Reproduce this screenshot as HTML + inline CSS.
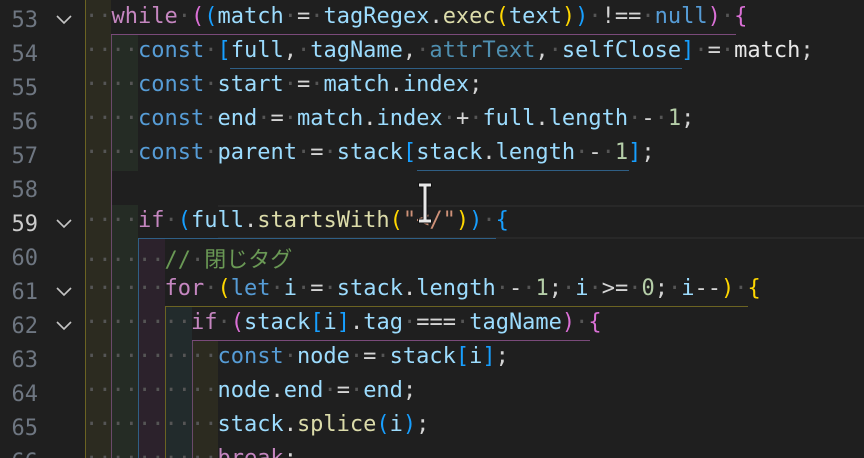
<!DOCTYPE html>
<html><head><meta charset="utf-8"><style>
html,body{margin:0;padding:0;background:#1f1f1f;width:864px;height:458px;overflow:hidden;position:relative}
.ln{position:absolute;left:0;width:38px;text-align:right;font:22px "DejaVu Sans Mono",monospace;color:#6e7681;line-height:34px}
.fold{position:absolute;left:54px;width:20px;height:34px}
.l{position:absolute;left:85px;height:34px;line-height:34px;font:22px "DejaVu Sans Mono","Noto Sans CJK JP",monospace;white-space:pre;color:#d4d4d4}
.d{color:#555}
.bg{position:absolute}
.y{background:#2c2b20}.g{background:#252c25}.p{background:#2c222c}.b{background:#222b2c}
.k{color:#c586c0}.c{color:#569cd6}.v{color:#9cdcfe}.f{color:#dcdcaa}.s{color:#ce9178}.n{color:#b5cea8}.cm{color:#6a9955}
.B1{color:#ffd700}.B2{color:#da70d6}.B3{color:#179fff}.dim{color:#4f8fb0}
.h{position:absolute;height:1px}.vl{position:absolute;width:1px}
.t{position:absolute;left:0;top:3px;width:864px;height:458px}
</style></head><body>
<div class="bg y" style="left:85px;width:26px;top:0;height:458px"></div>
<div class="bg g" style="left:111px;width:27px;top:35px;height:136px"></div>
<div class="bg g" style="left:111px;width:27px;top:205px;height:253px"></div>
<div class="bg p" style="left:138px;width:27px;top:239px;height:219px"></div>
<div class="bg b" style="left:165px;width:27px;top:307px;height:151px"></div>
<div class="bg y" style="left:192px;width:26px;top:341px;height:117px"></div>
<div style="position:absolute;left:218px;right:0;top:205px;height:34px;border-top:2px solid #282828;border-bottom:2px solid #282828;box-sizing:border-box"></div>
<div class="vl" style="left:85px;top:0;height:458px;background:#6b6322"></div>
<div class="vl" style="left:111px;top:35px;height:423px;background:#6a4a6a"></div>
<div class="vl" style="left:138px;top:239px;height:219px;background:#2f5f85"></div>
<div class="vl" style="left:165px;top:307px;height:151px;background:#6b6322"></div>
<div class="vl" style="left:192px;top:341px;height:117px;background:#6a4a6a"></div>
<div class="h" style="left:111px;width:625px;top:34px;background:#7a4a7a"></div>
<div class="h" style="left:230px;width:452px;top:68px;background:#2f5f85"></div>
<div class="h" style="left:417px;width:212px;top:170px;background:#2f5f85"></div>
<div class="h" style="left:138px;width:358px;top:238px;background:#2f5f85"></div>
<div class="h" style="left:165px;width:583px;top:306px;background:#6b6322"></div>
<div class="h" style="left:192px;width:398px;top:340px;background:#7a4a7a"></div>

<div class="t">
<div class="ln" style="top:1px">53</div><div class="ln" style="top:35px">54</div><div class="ln" style="top:69px">55</div><div class="ln" style="top:103px">56</div><div class="ln" style="top:137px">57</div><div class="ln" style="top:171px">58</div><div class="ln" style="top:205px;color:#cccccc">59</div><div class="ln" style="top:239px">60</div><div class="ln" style="top:273px">61</div><div class="ln" style="top:307px">62</div><div class="ln" style="top:341px">63</div><div class="ln" style="top:375px">64</div><div class="ln" style="top:409px">65</div><div class="ln" style="top:443px">66</div>
<svg class="fold" style="top:0px" viewBox="0 0 20 34"><path d="M3 13l7 7 7-7" fill="none" stroke="#c5c5c5" stroke-width="1.6"/></svg>
<svg class="fold" style="top:204px" viewBox="0 0 20 34"><path d="M3 13l7 7 7-7" fill="none" stroke="#c5c5c5" stroke-width="1.6"/></svg>
<svg class="fold" style="top:272px" viewBox="0 0 20 34"><path d="M3 13l7 7 7-7" fill="none" stroke="#c5c5c5" stroke-width="1.6"/></svg>
<svg class="fold" style="top:306px" viewBox="0 0 20 34"><path d="M3 13l7 7 7-7" fill="none" stroke="#c5c5c5" stroke-width="1.6"/></svg>

<div class="l" style="top:1px"><span class="d">··</span><span class="k">while</span><span class="d">·</span><span class="B2">(</span><span class="B3">(</span><span class="v">match</span><span class="d">·</span>=<span class="d">·</span><span class="v">tagRegex</span>.<span class="f">exec</span><span class="B1">(</span><span class="v">text</span><span class="B1">)</span><span class="B3">)</span><span class="d">·</span>!==<span class="d">·</span><span class="c">null</span><span class="B2">)</span><span class="d">·</span><span class="B2">{</span></div>
<div class="l" style="top:35px"><span class="d">····</span><span class="c">const</span><span class="d">·</span><span class="B3">[</span><span class="v">full</span>,<span class="d">·</span><span class="v">tagName</span>,<span class="d">·</span><span class="dim">attrText</span>,<span class="d">·</span><span class="v">selfClose</span><span class="B3">]</span><span class="d">·</span>=<span class="d">·</span><span style="color:#e8e8e8">match</span>;</div>
<div class="l" style="top:69px"><span class="d">····</span><span class="c">const</span><span class="d">·</span><span class="v">start</span><span class="d">·</span>=<span class="d">·</span><span class="v">match</span>.<span class="v">index</span>;</div>
<div class="l" style="top:103px"><span class="d">····</span><span class="c">const</span><span class="d">·</span><span class="v">end</span><span class="d">·</span>=<span class="d">·</span><span class="v">match</span>.<span class="v">index</span><span class="d">·</span>+<span class="d">·</span><span class="v">full</span>.<span class="v">length</span><span class="d">·</span>-<span class="d">·</span><span class="n">1</span>;</div>
<div class="l" style="top:137px"><span class="d">····</span><span class="c">const</span><span class="d">·</span><span class="v">parent</span><span class="d">·</span>=<span class="d">·</span><span class="v">stack</span><span class="B3">[</span><span class="v">stack</span>.<span class="v">length</span><span class="d">·</span>-<span class="d">·</span><span class="n">1</span><span class="B3">]</span>;</div>
<div class="l" style="top:205px"><span class="d">····</span><span class="k">if</span><span class="d">·</span><span class="B3">(</span><span class="v">full</span>.<span class="f">startsWith</span><span class="B1">(</span><span class="s">"&lt;/"</span><span class="B1">)</span><span class="B3">)</span><span class="d">·</span><span class="B3">{</span></div>
<div class="l" style="top:239px"><span class="d">······</span><span class="cm">//<span class="d">·</span>閉じタグ</span></div>
<div class="l" style="top:273px"><span class="d">······</span><span class="k">for</span><span class="d">·</span><span class="B1">(</span><span class="c">let</span><span class="d">·</span><span class="v">i</span><span class="d">·</span>=<span class="d">·</span><span class="v">stack</span>.<span class="v">length</span><span class="d">·</span>-<span class="d">·</span><span class="n">1</span>;<span class="d">·</span><span class="v">i</span><span class="d">·</span>&gt;=<span class="d">·</span><span class="n">0</span>;<span class="d">·</span><span class="v">i</span>--<span class="B1">)</span><span class="d">·</span><span class="B1">{</span></div>
<div class="l" style="top:307px"><span class="d">········</span><span class="k">if</span><span class="d">·</span><span class="B2">(</span><span class="v">stack</span><span class="B3">[</span><span class="v">i</span><span class="B3">]</span>.<span class="v">tag</span><span class="d">·</span>===<span class="d">·</span><span class="v">tagName</span><span class="B2">)</span><span class="d">·</span><span class="B2">{</span></div>
<div class="l" style="top:341px"><span class="d">··········</span><span class="c">const</span><span class="d">·</span><span class="v">node</span><span class="d">·</span>=<span class="d">·</span><span class="v">stack</span><span class="B3">[</span><span class="v">i</span><span class="B3">]</span>;</div>
<div class="l" style="top:375px"><span class="d">··········</span><span class="v">node</span>.<span class="v">end</span><span class="d">·</span>=<span class="d">·</span><span class="v">end</span>;</div>
<div class="l" style="top:409px"><span class="d">··········</span><span class="v">stack</span>.<span class="f">splice</span><span class="B3">(</span><span class="v">i</span><span class="B3">)</span>;</div>
<div class="l" style="top:443px"><span class="d">··········</span><span class="k">break</span>;</div>
</div>
<svg style="position:absolute;left:414px;top:182px" width="22" height="44" viewBox="0 0 22 44"><path d="M4 3h14M11 3v36M4 39h14" stroke="#111" stroke-width="5" fill="none"/><path d="M5 3h12M11 3v36M5 39h12" stroke="#e8e8e8" stroke-width="3" fill="none"/></svg>
</body></html>
